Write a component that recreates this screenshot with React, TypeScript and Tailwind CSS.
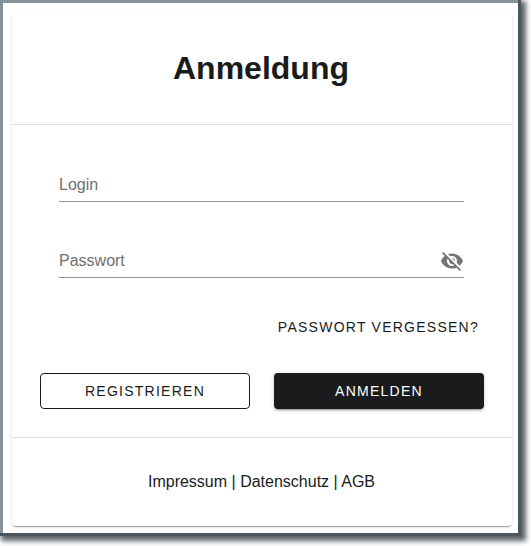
const visibilityOffPath =
  'M12 7c2.76 0 5 2.24 5 5 0 .65-.13 1.26-.36 1.83l2.92 2.92c1.51-1.26 2.7-2.89 3.43-4.75-1.73-4.39-6-7.5-11-7.5-1.4 0-2.74.25-3.98.7l2.16 2.16C10.74 7.13 11.35 7 12 7zM2 4.27l2.28 2.28.46.46C3.08 8.3 1.78 10.02 1 12c1.73 4.39 6 7.5 11 7.5 1.55 0 3.03-.3 4.38-.84l.42.42L19.73 22 21 20.73 3.27 3 2 4.27zM7.53 9.8l1.55 1.55c-.05.21-.08.43-.08.65 0 1.66 1.34 3 3 3 .22 0 .44-.03.65-.08l1.55 1.55c-.67.33-1.41.53-2.2.53-2.76 0-5-2.24-5-5 0-.79.2-1.53.53-2.2zm4.31-.78l3.15 3.15.02-.16c0-1.66-1.34-3-3-3l-.17.01z';

function Field({ label, icon }: { label: string; icon?: boolean }) {
  return (
    <div className="flex h-[33px] items-center justify-between border-b border-[#949494] pb-[1px]">
      <span className="text-base leading-none text-[#6f6f6f]">{label}</span>
      {icon && (
        <svg viewBox="0 0 24 24" className="h-6 w-6 fill-[#757575]">
          <path d={visibilityOffPath} />
        </svg>
      )}
    </div>
  );
}

export default function App() {
  return (
    <div className="h-[546px] w-[531px] overflow-hidden bg-white font-['Liberation_Sans',sans-serif]">
      <div className="h-[536px] w-[521px] bg-[#4a555c] shadow-[3px_3px_5px_2px_rgba(50,60,66,0.8)]">
        <div className="h-[533px] w-[518px] bg-[#84929c] pl-[3px] pt-[3px]">
          <div className="h-[530px] w-[515px] bg-white pl-[9px] pt-[9px]">
            <div className="flex h-[514px] w-[500px] flex-col rounded bg-white shadow-[0_2px_1px_-1px_rgba(0,0,0,0.2),0_1px_1px_0_rgba(0,0,0,0.14),0_1px_3px_0_rgba(0,0,0,0.12)]">
              <div className="flex h-[113px] items-center justify-center border-b border-[#e0e0e0] pr-[2px]">
                <h1 className="text-[32px] font-bold leading-none text-[#1a1b1d]">Anmeldung</h1>
              </div>

              <div className="flex flex-col gap-[43px] pl-[47px] pr-[48.5px] pt-[44px]">
                <Field label="Login" />
                <Field label="Passwort" icon />
              </div>

              <div className="flex justify-end pr-[33px] pt-[42px]">
                <button className="text-sm leading-none tracking-[1.25px] text-[#1a1b1d]">PASSWORT VERGESSEN?</button>
              </div>

              <div className="flex gap-[24px] px-[28px] pt-[39px]">
                <button className="h-[36px] w-[210px] rounded border border-[#1a1b1d] bg-white text-sm tracking-[1.25px] text-[#1a1b1d]">
                  REGISTRIEREN
                </button>
                <button className="h-[36px] w-[210px] rounded bg-[#1a1b1d] text-sm tracking-[1.25px] text-white shadow-[0_3px_1px_-2px_rgba(0,0,0,0.2),0_2px_2px_0_rgba(0,0,0,0.14),0_1px_5px_0_rgba(0,0,0,0.12)]">
                  ANMELDEN
                </button>
              </div>

              <div className="mt-[28px] flex h-[88px] items-center justify-center border-t border-[#e0e0e0] pr-[1px] text-base text-[#1a1b1d]">
                Impressum | Datenschutz | AGB
              </div>
            </div>
          </div>
        </div>
      </div>
    </div>
  );
}
